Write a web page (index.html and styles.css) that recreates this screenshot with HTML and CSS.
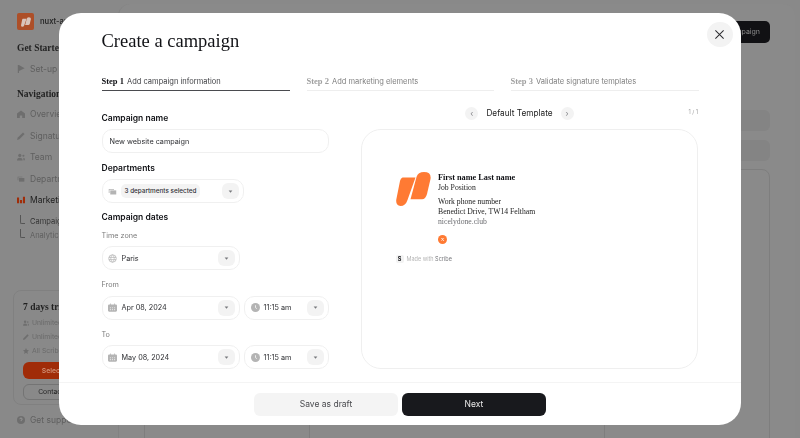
FILE: index.html
```html
<!DOCTYPE html>
<html lang="en">
<head>
    <meta charset="UTF-8">
    <meta name="viewport" content="width=device-width, initial-scale=1.0">
    <title>Create a campaign</title>
    <link rel="stylesheet" href="styles.css">
</head>
<body>
    <svg class="sprite" aria-hidden="true">
        <symbol id="logo" viewBox="0 0 35 34">
            <path d="M6.5 5.500H19.500L11.500 28Q9.500 34 4.500 34Q-.5 33.500 .3 27.500L4 9Q4.600 6 6.500 5.500Z"/>
            <path d="M20.500 5Q22 0 28 0Q35.500 0 34.500 7L31 22Q29.500 27.300 26 27.300H14.500Z"/>
        </symbol>
        <symbol id="stack" viewBox="0 0 12 12">
            <path d="M1 2.500h7v1H2v4.500H1z"/><path d="M3 4.500h8v5.500H3z"/>
        </symbol>
        <symbol id="globe" viewBox="0 0 12 12">
            <path fill="none" stroke="currentColor" d="M6 1a5 5 0 1 0 0 10a5 5 0 1 0 0-10M6 1c-3 3-3 7 0 10M6 1c3 3 3 7 0 10M1 4.500h10M1 7.500h10"/>
        </symbol>
        <symbol id="calendar" viewBox="0 0 12 12">
            <path d="M3 .5h1V2h4V.5h1V2h1.500Q12 2 12 3.500v6.500Q12 11.500 10.500 11.500h-9Q0 11.500 0 10V3.500Q0 2 1.500 2H3z"/>
            <path fill="#fff" opacity=".6" d="M2.500 5.500h1.500V7H2.500zM5.250 5.500h1.500V7h-1.500zM8 5.500h1.500V7H8zM2.500 8h1.500v1.500H2.500zM5.250 8h1.500v1.500h-1.500zM8 8h1.500v1.500H8z"/>
        </symbol>
        <symbol id="clock" viewBox="0 0 12 12">
            <path d="M6 0a6 6 0 1 0 0 12a6 6 0 1 0 0-12z"/>
            <path fill="none" stroke="#fff" d="M6 3v3.200l1.800 1.300"/>
        </symbol>
        <symbol id="caret" viewBox="0 0 6 4">
            <path d="M.5 .5h5L3 3.500z"/>
        </symbol>
        <symbol id="flag" viewBox="0 0 10 10">
            <path d="M1 0h1.500l7 4-7 3.500V10H1z"/>
        </symbol>
        <symbol id="home" viewBox="0 0 10 10">
            <path d="M5 .5l5 4v5.500H6.500V7h-3v3H0V4.500z"/>
        </symbol>
        <symbol id="pencil" viewBox="0 0 10 10">
            <path d="M7.500 .5l2 2L3 9 0 10l1-3z"/>
        </symbol>
        <symbol id="team" viewBox="0 0 10 10">
            <circle cx="3.500" cy="3" r="2"/><path d="M0 9.500Q0 6 3.500 6T7 9.500z"/><circle cx="8" cy="3.500" r="1.300"/><path d="M8 6q2 0 2 3H8z"/>
        </symbol>
        <symbol id="bars" viewBox="0 0 10 10">
            <path d="M0 2h2.600v7H0zM3.700 5h2.600v4H3.700zM7.400 1h2.600v8H7.400z"/>
        </symbol>
        <symbol id="help" viewBox="0 0 10 10">
            <path d="M5 0a5 5 0 1 0 0 10a5 5 0 1 0 0-10z"/>
            <path fill="none" stroke="#a0a0a0" d="M3.500 4Q3.500 2.500 5 2.500T6.500 4Q6.500 5 5 5.500V6.500"/>
        </symbol>
        <symbol id="star" viewBox="0 0 10 10">
            <path d="M5 0l1.500 3.400 3.500.4-2.600 2.400.7 3.600L5 8l-3.100 1.800.7-3.600L0 3.800l3.500-.4z"/>
        </symbol>
    </svg>

    <!-- page behind the dialog -->
    <div class="app">
        <aside class="sidebar">
            <div class="brand">
                <span class="brand-mark"><svg class="brand-logo"><use href="#logo"/></svg></span>
                <span>nuxt-app</span>
            </div>
            <h4 class="side-title">Get Started</h4>
            <div class="side-link"><svg class="side-ico"><use href="#flag"/></svg>Set-up</div>
            <h4 class="side-title side-title-gap">Navigation</h4>
            <div class="side-link"><svg class="side-ico"><use href="#home"/></svg>Overview</div>
            <div class="side-link"><svg class="side-ico"><use href="#pencil"/></svg>Signatures</div>
            <div class="side-link"><svg class="side-ico"><use href="#team"/></svg>Team</div>
            <div class="side-link"><svg class="side-ico"><use href="#stack"/></svg>Departments</div>
            <div class="side-link side-link-on"><svg class="side-ico side-ico-red"><use href="#bars"/></svg>Marketing</div>
            <div class="side-sub side-sub-on">Campaigns</div>
            <div class="side-sub">Analytics</div>

            <div class="trial">
                <h5>7 days trial</h5>
                <p><svg><use href="#team"/></svg>Unlimited users</p>
                <p><svg><use href="#pencil"/></svg>Unlimited signatures</p>
                <p><svg><use href="#star"/></svg>All Scribe features</p>
                <div class="trial-select">Select plan</div>
                <div class="trial-contact">Contact sales</div>
            </div>
            <div class="side-link side-support"><svg class="side-ico"><use href="#help"/></svg>Get support</div>
        </aside>
        <main class="main">
            <div class="main-top"><span class="main-button">New campaign</span></div>
            <div class="main-row"></div>
            <div class="main-row"></div>
            <div class="main-table"><i></i><i></i><i></i></div>
        </main>
    </div>

    <!-- dialog -->
    <div class="modal">
        <button class="close" type="button" aria-label="Close">
            <svg viewBox="0 0 12 12"><path d="M1.500 1.500l9 9M10.500 1.500l-9 9"/></svg>
        </button>
        <div class="modal-body">
            <h1>Create a campaign</h1>
            <div class="steps">
                <div class="step step-on"><b>Step 1</b> Add campaign information</div>
                <div class="step"><b>Step 2</b> Add marketing elements</div>
                <div class="step"><b>Step 3</b> Validate signature templates</div>
            </div>
            <div class="columns">
                <form class="fields">
                    <h2>Campaign name</h2>
                    <div class="box box-full">New website campaign</div>

                    <h2 class="gap-title">Departments</h2>
                    <div class="box box-dept">
                        <svg class="ico ico-stack"><use href="#stack"/></svg>
                        <span class="tag">3 departments selected</span>
                        <span class="drop drop-far"><svg><use href="#caret"/></svg></span>
                    </div>

                    <h2 class="gap-title gap-dates">Campaign dates</h2>
                    <h3>Time zone</h3>
                    <div class="box box-date">
                        <svg class="ico"><use href="#globe"/></svg>
                        <span class="val">Paris</span>
                        <span class="drop"><svg><use href="#caret"/></svg></span>
                    </div>

                    <h3 class="gap-label">From</h3>
                    <div class="pair">
                        <div class="box box-date">
                            <svg class="ico"><use href="#calendar"/></svg>
                            <span class="val">Apr 08, 2024</span>
                            <span class="drop"><svg><use href="#caret"/></svg></span>
                        </div>
                        <div class="box box-time">
                            <svg class="ico"><use href="#clock"/></svg>
                            <span class="val">11:15 am</span>
                            <span class="drop"><svg><use href="#caret"/></svg></span>
                        </div>
                    </div>

                    <h3 class="gap-label">To</h3>
                    <div class="pair">
                        <div class="box box-date">
                            <svg class="ico"><use href="#calendar"/></svg>
                            <span class="val">May 08, 2024</span>
                            <span class="drop"><svg><use href="#caret"/></svg></span>
                        </div>
                        <div class="box box-time">
                            <svg class="ico"><use href="#clock"/></svg>
                            <span class="val">11:15 am</span>
                            <span class="drop"><svg><use href="#caret"/></svg></span>
                        </div>
                    </div>
                </form>

                <section class="preview">
                    <div class="preview-head">
                        <span class="nav-btn">‹</span>
                        <span class="preview-name">Default Template</span>
                        <span class="nav-btn">›</span>
                        <span class="count">1 / 1</span>
                    </div>
                    <div class="card">
                        <div class="signature">
                            <svg class="sig-logo"><use href="#logo"/></svg>
                            <div class="sig-text">
                                <strong>First name Last name</strong>
                                <div>Job Position</div>
                                <div class="sig-gap">Work phone number</div>
                                <div>Benedict Drive, TW14 Feltham</div>
                                <div class="sig-link">nicelydone.club</div>
                                <span class="sig-social">X</span>
                            </div>
                        </div>
                        <div class="made"><span class="made-mark">S</span>Made with <em>Scribe</em></div>
                    </div>
                </section>
            </div>
        </div>
        <div class="modal-foot">
            <button class="btn btn-light" type="button">Save as draft</button>
            <button class="btn btn-dark" type="button">Next</button>
        </div>
    </div>
</body>
</html>
```

FILE: styles.css
```css
* {
    box-sizing: border-box;
}

html, body {
    height: 100%;
}

body {
    margin: 0;
    overflow: hidden;
    background-color: #898989;
    font-family: Inter, "Liberation Sans", sans-serif;
    color: #1a1b1f;
}

.sprite {
    display: none;
}

/* page behind the dialog */
.app {
    display: flex;
    height: 438px;
    filter: blur(.4px);
}

.sidebar {
    width: 118px;
    padding: 13px 0 0 13px;
    flex-shrink: 0;
    color: #5f5f5f;
    font-size: 8.500px;
}

.brand {
    display: flex;
    align-items: center;
    gap: 6px;
    height: 17px;
    padding-left: 4px;
    margin-bottom: 11px;
    font-size: 7.500px;
    font-weight: 600;
    color: #2a2a2a;
}

.brand-mark {
    display: flex;
    align-items: center;
    justify-content: center;
    width: 17px;
    height: 17px;
    border-radius: 2px;
    background-color: #ad4f28;
}

.brand-logo {
    width: 10px;
    height: 10px;
    fill: #d9c4ba;
}

.side-title {
    margin: 0 0 3px 4px;
    font-family: "Liberation Serif", serif;
    font-size: 9.500px;
    line-height: 14px;
    font-weight: 700;
    color: #232323;
}

.side-title-gap {
    margin-top: 7px;
}

.side-link {
    display: flex;
    align-items: center;
    gap: 5px;
    height: 21.500px;
    padding-left: 4px;
    white-space: nowrap;
}

.side-link-on {
    color: #222;
}

.side-ico {
    width: 8px;
    height: 8px;
    flex-shrink: 0;
    fill: #6e6e6e;
}

.side-ico-red {
    fill: #a02c08;
}

.side-sub {
    position: relative;
    height: 14px;
    padding-left: 17px;
    font-size: 7.500px;
    line-height: 14px;
    white-space: nowrap;
}

.side-sub::before {
    content: "";
    position: absolute;
    left: 7px;
    top: 0;
    width: 4px;
    height: 8px;
    border-left: 1px solid #555;
    border-bottom: 1px solid #555;
    border-bottom-left-radius: 2px;
}

.side-sub-on {
    color: #333;
    margin-top: 4px;
}

.trial {
    width: 94px;
    height: 115px;
    margin-top: 47px;
    padding: 10px 9px;
    border: 1px solid #808080;
    border-radius: 8px;
    font-size: 6.800px;
}

.trial h5 {
    margin: 0 0 3px;
    font-family: "Liberation Serif", serif;
    font-size: 9.500px;
    line-height: 12px;
    font-weight: 700;
    color: #1f1f1f;
}

.trial p {
    display: flex;
    align-items: center;
    gap: 3px;
    margin: 0;
    line-height: 14px;
    white-space: nowrap;
    color: #6a6a6a;
}

.trial p svg {
    width: 6px;
    height: 6px;
    flex-shrink: 0;
    fill: #6e6e6e;
}

.trial-select {
    height: 17px;
    margin-top: 4px;
    border-radius: 6px;
    background-color: #a02c08;
    color: #cf8f75;
    text-align: center;
    line-height: 17px;
    font-weight: 600;
    white-space: nowrap;
}

.trial-contact {
    height: 16px;
    margin-top: 5px;
    border: 1px solid #747474;
    border-radius: 6px;
    color: #222;
    text-align: center;
    line-height: 14px;
    white-space: nowrap;
}

.side-support {
    margin-top: 4px;
}

.main {
    width: 677px;
    height: 434px;
    margin-top: 4px;
    padding: 17px 25px 0 25px;
    border-left: 1px solid #828282;
    border-radius: 12px 12px 0 0;
    background-color: #8a8a8a;
}

.main-top {
    display: flex;
    justify-content: flex-end;
    height: 22px;
    margin-bottom: 67px;
}

.main-button {
    height: 22px;
    padding: 0 10px;
    border-radius: 5px;
    background-color: #111114;
    color: #8c8c8c;
    font-size: 7px;
    line-height: 22px;
}

.main-row {
    height: 21px;
    margin-bottom: 9px;
    border-radius: 6px;
    background-color: #848484;
}

.main-table {
    display: flex;
    height: 270px;
    margin-top: -1px;
    border: 1px solid #7e7e7e;
    border-radius: 8px 8px 0 0;
}

.main-table i:nth-child(1) {
    width: 165px;
    border-right: 1px solid #7e7e7e;
}

.main-table i:nth-child(2) {
    width: 295px;
    border-right: 1px solid #7e7e7e;
}

/* dialog */
.modal {
    position: absolute;
    left: 59px;
    top: 13px;
    width: 682px;
    height: 412px;
    display: flex;
    flex-direction: column;
    border-radius: 22px;
    background-color: #fff;
}

.close {
    position: absolute;
    top: 8.500px;
    right: 8.500px;
    display: flex;
    align-items: center;
    justify-content: center;
    width: 25.500px;
    height: 25.500px;
    padding: 0;
    border: 0;
    border-radius: 50%;
    background-color: #f3f3f3;
}

.close svg {
    width: 11px;
    height: 11px;
    fill: none;
    stroke: #2a2a2e;
    stroke-width: 1.100;
}

.modal-body {
    flex: 1;
    padding: 16px 43px 0 42.500px;
    filter: blur(.25px);
}

h1 {
    margin: 0;
    font-family: "Liberation Serif", serif;
    font-size: 18.500px;
    line-height: 24px;
    font-weight: 400;
    color: #111216;
}

.steps {
    display: grid;
    grid-template-columns: 188px 187px 188px;
    gap: 17px;
    margin-top: 22px;
}

.step {
    height: 16px;
    border-bottom: 1.500px solid #eeeeee;
    font-size: 7.500px;
    line-height: 12px;
    color: #808080;
    white-space: nowrap;
}

.step b {
    margin-right: 1px;
    font-family: "Liberation Serif", serif;
    font-size: 8.500px;
    font-weight: 700;
    color: #a0a0a0;
}

.step-on {
    border-bottom-color: #4a4b4f;
    color: #3c3d41;
}

.step-on b {
    color: #111216;
}

.columns {
    display: flex;
    gap: 32.500px;
    margin-top: 21px;
}

.fields {
    width: 227px;
    flex-shrink: 0;
}

h2 {
    margin: 0 0 5px;
    font-size: 8.500px;
    line-height: 12px;
    font-weight: 600;
    color: #111216;
}

.gap-title {
    margin-top: 9px;
}

.gap-dates {
    margin-top: 8px;
}

h3 {
    margin: 7px 0 4px;
    font-size: 7.250px;
    line-height: 12px;
    font-weight: 400;
    color: #7c7c7c;
}

.gap-label {
    margin: 9px 0 4.500px;
}

.box {
    display: flex;
    align-items: center;
    height: 24px;
    padding: 0 3.500px 0 5px;
    border: 1px solid #f0f0f0;
    border-radius: 10px;
    background-color: #fff;
    font-size: 7.250px;
    color: #2e2f33;
}

.box-full {
    width: 227px;
    padding-left: 7px;
}

.box-dept {
    width: 142px;
}

.box-date {
    width: 138px;
}

.box-time {
    width: 85px;
    padding-left: 6px;
}

.pair {
    display: flex;
    gap: 4px;
}

.ico {
    width: 9px;
    height: 9px;
    flex-shrink: 0;
    margin-right: 5px;
    fill: #b4b4b4;
    color: #b4b4b4;
}

.ico-stack {
    width: 9px;
    height: 9px;
    margin-right: 4px;
}

.box-time .ico {
    margin-right: 4px;
}

.val {
    flex: 1;
    white-space: nowrap;
}

.tag {
    padding: 0 4px;
    height: 14.500px;
    border-radius: 5px;
    background-color: #f3f3f3;
    font-size: 6.350px;
    font-weight: 500;
    line-height: 14.500px;
    white-space: nowrap;
}

.drop {
    display: flex;
    align-items: center;
    justify-content: center;
    width: 17px;
    height: 16px;
    flex-shrink: 0;
    border-radius: 6px;
    background-color: #f3f3f3;
}

.drop-far {
    margin-left: auto;
}

.drop svg {
    width: 5px;
    height: 3px;
    fill: #77787c;
}

.preview {
    flex: 1;
    margin-top: -7px;
}

.preview-head {
    position: relative;
    display: flex;
    align-items: center;
    justify-content: center;
    gap: 8px;
    height: 16px;
    margin-bottom: 8px;
    padding-right: 20px;
}

.nav-btn {
    width: 13px;
    height: 13px;
    border-radius: 50%;
    background-color: #f3f3f3;
    color: #85868a;
    font-size: 8px;
    line-height: 12px;
    text-align: center;
}

.preview-name {
    font-size: 8.250px;
    color: #222;
}

.count {
    position: absolute;
    right: 0;
    top: 4px;
    font-size: 5.500px;
    color: #a0a0a0;
}

.card {
    height: 240px;
    padding: 42px 0 0 33.500px;
    border: 1px solid #efefef;
    border-radius: 20px;
}

.signature {
    display: flex;
    gap: 7.500px;
}

.sig-logo {
    width: 35px;
    height: 34px;
    flex-shrink: 0;
    fill: #ff7a33;
}

.sig-text {
    padding-top: .5px;
    font-family: "Liberation Serif", serif;
    font-size: 7.700px;
    line-height: 10.200px;
    color: #222;
}

.sig-text strong {
    color: #111216;
    font-size: 8.250px;
}

.sig-gap {
    margin-top: 4px;
}

.sig-link {
    color: #6c6d71;
}

.sig-social {
    display: block;
    width: 9px;
    height: 9px;
    margin-top: 7.500px;
    border-radius: 50%;
    background-color: #ff7a33;
    color: #fff;
    font-size: 5px;
    line-height: 9px;
    text-align: center;
}

.made {
    display: flex;
    align-items: center;
    margin-top: 11px;
    font-size: 5.500px;
    color: #b5b5b5;
    white-space: pre;
}

.made-mark {
    width: 8px;
    height: 8px;
    margin-right: 3px;
    border-radius: 2px;
    background-color: #f3f3f3;
    color: #1a1b1f;
    font-weight: 700;
    line-height: 8px;
    text-align: center;
}

.made em {
    font-style: normal;
    color: #77787c;
}

.modal-foot {
    display: flex;
    justify-content: center;
    gap: 4px;
    height: 43px;
    padding-top: 9.500px;
    border-top: 1px solid #f4f4f4;
    filter: blur(.25px);
}

.btn {
    width: 144px;
    height: 23.500px;
    padding: 0;
    border: 0;
    border-radius: 6px;
    font-family: inherit;
    font-size: 8.500px;
}

.btn-light {
    background-color: #f4f4f4;
    color: #4a4b4f;
}

.btn-dark {
    background-color: #18191d;
    color: #e8e8e8;
}
```
